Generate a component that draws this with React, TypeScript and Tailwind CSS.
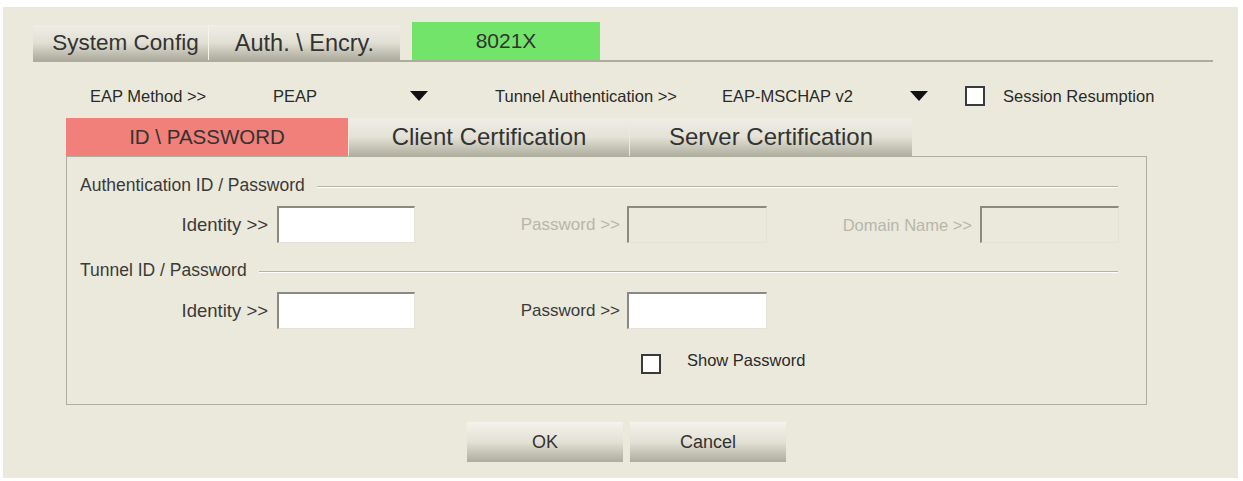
import React from "react";

const font = { fontFamily: '"Liberation Sans", Arial, sans-serif' };

function Triangle() {
  return (
    <svg width="18" height="10" viewBox="0 0 18 10">
      <path d="M0 0 H18 L9 10 Z" fill="#111" />
    </svg>
  );
}

function Check() {
  return <span className="block h-[20px] w-[20px] border-2 border-[#3a3a3a] bg-white" />;
}

function Field({ label, labelW, gap, inputW, size, disabled }: { label: string; labelW: number; gap: number; inputW: number; size: string; disabled?: boolean }) {
  return (
    <div className="flex items-center">
      <span
        className={`text-right leading-[20px] ${size} ${disabled ? "text-[#b8b6aa]" : "text-[#3a3a3a]"}`}
        style={{ width: labelW, marginRight: gap }}
      >
        {label}
      </span>
      <span
        className={`block h-[37px] border-t-2 border-l-2 border-r border-b border-t-[#8a8a80] border-l-[#8a8a80] border-r-[#e4e2d6] border-b-[#e4e2d6] ${disabled ? "bg-[#ebe9db]" : "bg-white"}`}
        style={{ width: inputW }}
      />
    </div>
  );
}

function Section({ title }: { title: string }) {
  return (
    <div className="flex items-center pr-[28px]">
      <span className="text-[17.5px] leading-[20px] text-[#3a3a3a]">{title}</span>
      <span className="ml-[12px] mt-[3px] h-[1px] flex-1 bg-[#b5b3a6] shadow-[0_1px_0_#fff]" />
    </div>
  );
}

export default function App() {
  return (
    <div className="h-[481px] w-[1243px] bg-white pl-[3px] pr-[5px] pt-[7px] pb-[3px]" style={font}>
      <div className="h-full w-full bg-[#ebe9db]">
        {/* main tab strip */}
        <div className="pl-[30px] pt-[15px]">
          <div className="flex items-end">
            <div className="flex h-[35px] w-[175px] items-center justify-center bg-gradient-to-b from-[#efeee6] via-[#e2e0d4] to-[#aeac9f] pl-[10px] text-[22.5px] leading-[26px] text-[#333]">
              System Config
            </div>
            <div className="flex h-[35px] w-[192px] items-center justify-center border-l border-[#f5f4ec] bg-gradient-to-b from-[#efeee6] via-[#e2e0d4] to-[#aeac9f] text-[23.5px] leading-[26px] text-[#333]">
              Auth. \ Encry.
            </div>
            <div className="ml-[12px] flex h-[38px] w-[188px] items-center justify-center bg-[#72e46a] text-[21px] leading-[26px] text-[#333]">
              8021X
            </div>
          </div>
          <div className="h-[2px] w-[1180px] bg-[#aeac9f]" />
        </div>

        {/* EAP method row */}
        <div className="mt-[23px] flex h-[22px] items-center text-[16.5px] leading-[20px] text-[#2a2a2a]">
          <span className="ml-[87px] w-[183px]">EAP Method &gt;&gt;</span>
          <span className="w-[137px]">PEAP</span>
          <Triangle />
          <span className="ml-[67px] w-[227px]">Tunnel Authentication &gt;&gt;</span>
          <span className="w-[188px]">EAP-MSCHAP v2</span>
          <Triangle />
          <span className="ml-[37px]">
            <Check />
          </span>
          <span className="ml-[18px]">Session Resumption</span>
        </div>

        {/* sub tabs */}
        <div className="ml-[63px] mt-[11px] flex h-[38px] items-stretch text-[#333]">
          <div className="flex w-[282px] items-center justify-center bg-[#f08079] text-[20.5px] leading-[26px]">
            ID \ PASSWORD
          </div>
          <div className="ml-[1px] flex w-[280px] items-center justify-center bg-gradient-to-b from-[#efeee6] via-[#e4e2d6] to-[#b0ae9f] text-[24px] leading-[26px]">
            Client Certification
          </div>
          <div className="ml-[1px] flex w-[282px] items-center justify-center bg-gradient-to-b from-[#efeee6] via-[#e4e2d6] to-[#b0ae9f] text-[24px] leading-[26px]">
            Server Certification
          </div>
        </div>

        {/* tab body */}
        <div className="ml-[63px] flex h-[249px] w-[1081px] flex-col border border-[#b0ae9f] pl-[13px] pt-[18px]">
          <Section title="Authentication ID / Password" />
          <div className="mt-[11px] flex items-center">
            <Field label="Identity >>" labelW={188} gap={9} inputW={138} size="text-[18.5px]" />
            <Field label="Password >>" labelW={205} gap={7} inputW={140} size="text-[17px]" disabled />
            <Field label="Domain Name >>" labelW={205} gap={8} inputW={139} size="text-[16.5px]" disabled />
          </div>
          <div className="mt-[17px]">
            <Section title="Tunnel ID / Password" />
          </div>
          <div className="mt-[12px] flex items-center">
            <Field label="Identity >>" labelW={188} gap={9} inputW={138} size="text-[18.5px]" />
            <Field label="Password >>" labelW={205} gap={7} inputW={140} size="text-[17px]" />
          </div>
          <div className="ml-[561px] mt-[21px] flex items-start">
            <span className="mt-[4px]">
              <Check />
            </span>
            <span className="ml-[26px] text-[16.5px] leading-[20px] text-[#2a2a2a]">Show Password</span>
          </div>
        </div>

        {/* buttons */}
        <div className="ml-[464px] mt-[17px] flex gap-[7px] text-[18px] text-[#333]">
          <div className="flex h-[40px] w-[156px] items-center justify-center bg-gradient-to-b from-[#f4f3ec] via-[#e3e1d5] to-[#aeac9e]">
            OK
          </div>
          <div className="flex h-[40px] w-[156px] items-center justify-center bg-gradient-to-b from-[#f4f3ec] via-[#e3e1d5] to-[#aeac9e]">
            Cancel
          </div>
        </div>
      </div>
    </div>
  );
}
